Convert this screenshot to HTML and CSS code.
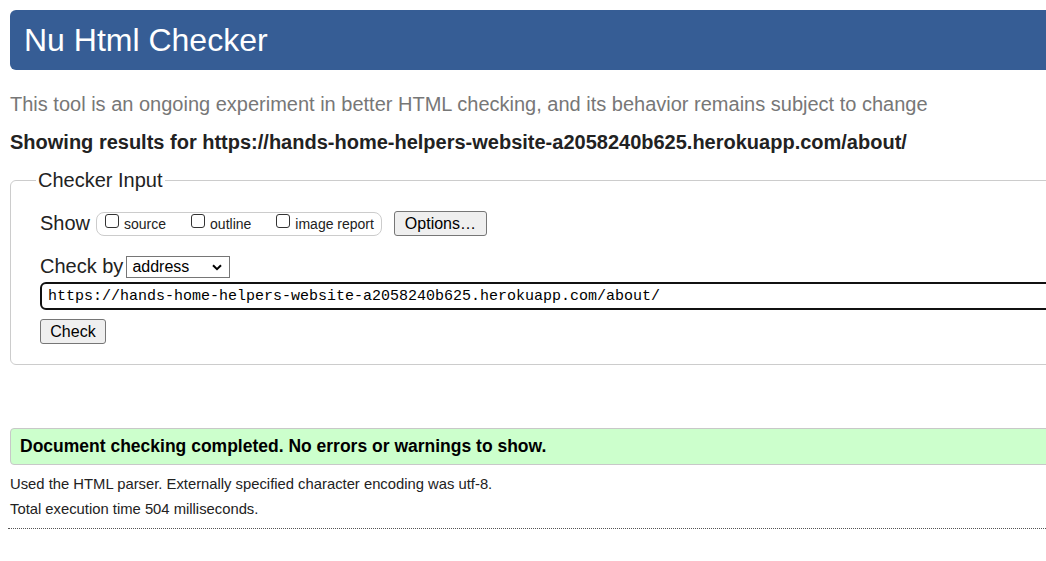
FILE: index.html
```html
<!DOCTYPE html>
<html lang="en">
<head>
<meta charset="utf-8">
<title>Showing results for https://hands-home-helpers-website-a2058240b625.herokuapp.com/about/ - Nu Html Checker</title>
<link rel="stylesheet" href="styles.css">
</head>
<body>
<div class="page">
  <h1 class="banner">Nu Html Checker</h1>
  <p class="tagline">This tool is an ongoing experiment in better HTML checking, and its behavior remains subject to change</p>
  <p class="showing">Showing results for https://hands-home-helpers-website-a2058240b625.herokuapp.com/about/</p>
  <form class="checker">
    <fieldset class="checker-box">
      <legend class="checker-legend">Checker Input</legend>
      <div class="show-row">
        <span class="big-label">Show</span>
        <span class="show-pill">
          <label class="opt"><input type="checkbox" class="cb"> source</label>
          <label class="opt"><input type="checkbox" class="cb"> outline</label>
          <label class="opt"><input type="checkbox" class="cb"> image report</label>
        </span>
        <button type="button" class="btn btn-options">Options…</button>
      </div>
      <div class="checkby-row">
        <span class="big-label">Check by</span>
        <span class="sel-wrap">
          <select class="sel"><option>address</option></select>
          <svg class="chev" width="10" height="7" viewBox="0 0 10 7" aria-hidden="true"><path d="M1 1.2 L5 5.2 L9 1.2" fill="none" stroke="#000" stroke-width="2"/></svg>
        </span>
      </div>
      <input type="text" class="url" value="https://hands-home-helpers-website-a2058240b625.herokuapp.com/about/">
      <div class="check-row"><button type="button" class="btn btn-check">Check</button></div>
    </fieldset>
  </form>
  <div class="success">Document checking completed. No errors or warnings to show.</div>
  <p class="details">Used the HTML parser. Externally specified character encoding was utf-8.</p>
  <p class="details">Total execution time 504 milliseconds.</p>
  <hr class="dotted">
</div>
</body>
</html>
```
FILE: styles.css
```css
html, body {
  margin: 0;
  padding: 0;
  overflow: hidden;
  background: #fff;
}
body {
  font-family: "Liberation Sans", Arial, sans-serif;
  color: #222;
}
.page {
  width: 1400px;
  padding: 10px 0 0 10px;
}
.banner {
  margin: 0;
  height: 60px;
  box-sizing: border-box;
  background: #365d95;
  color: #fff;
  border-radius: 6px;
  font-weight: normal;
  font-size: 32px;
  line-height: 60px;
  padding-left: 14px;
}
.tagline {
  margin: 20px 0 0;
  font-size: 20px;
  line-height: 28px;
  color: #777;
}
.showing {
  margin: 12px 0 0;
  font-size: 20px;
  font-weight: bold;
  line-height: 24px;
  color: #222;
}
.checker { margin: 15px 0 0; }
.checker-box {
  margin: 0;
  border: 1px solid #ccc;
  border-radius: 6px;
  padding: 6px 30px 20px 29px;
  min-width: 0;
}
.checker-legend {
  font-size: 20px;
  padding: 0 2px;
  margin-left: -4px;
  color: #222;
}
.show-row {
  display: flex;
  align-items: center;
  margin-top: 13px;
}
.big-label {
  font-size: 20px;
  color: #222;
}
.show-pill {
  display: inline-flex;
  align-items: center;
  border: 1px solid #ccc;
  border-radius: 8px;
  height: 22px;
  padding: 0 7px 0 8px;
  margin-left: 6px;
  font-size: 14px;
}
.opt {
  display: inline-flex;
  align-items: center;
  margin-right: 25px;
}
.opt:last-child { margin-right: 0; }
.cb {
  appearance: none;
  -webkit-appearance: none;
  box-sizing: border-box;
  margin: 0 5px 0 0;
  width: 14px;
  height: 14px;
  border: 1px solid #333;
  border-radius: 3px;
  background: #fff;
  position: relative;
  top: -3px;
}
.btn {
  font-family: "Liberation Sans", Arial, sans-serif;
  font-size: 16px;
  background: #efefef;
  border: 1px solid #767676;
  border-radius: 3px;
  color: #000;
  padding: 0 8px;
  height: 25px;
}
.btn-options { margin-left: 12px; width: 93px; }
.checkby-row {
  display: flex;
  align-items: center;
  margin-top: 19px;
}
.sel-wrap {
  position: relative;
  display: inline-flex;
  margin-left: 3px;
}
.sel {
  appearance: none;
  -webkit-appearance: none;
  font-family: "Liberation Sans", Arial, sans-serif;
  font-size: 16px;
  height: 22px;
  width: 104px;
  margin: 0;
  padding: 0 0 0 5px;
  border: 1px solid #767676;
  border-radius: 0;
  background: #fff;
  color: #000;
}
.chev {
  position: absolute;
  right: 8px;
  top: 8px;
  pointer-events: none;
}
.url {
  display: block;
  box-sizing: border-box;
  width: 1300px;
  height: 28px;
  margin-top: 4px;
  border: 2px solid #111;
  border-radius: 6px;
  padding: 0 6px;
  font-family: "Liberation Mono", "DejaVu Sans Mono", monospace;
  font-size: 15px;
  color: #000;
  outline: none;
}
.check-row { margin-top: 9px; }
.btn-check { width: 66px; }
.success {
  margin-top: 63px;
  height: 37px;
  box-sizing: border-box;
  background: #ccffcc;
  border: 1px solid #c8c8c8;
  border-radius: 4px;
  font-size: 17.5px;
  font-weight: bold;
  line-height: 34px;
  padding-left: 9px;
  color: #000;
}
.details {
  margin: 0;
  font-size: 14.8px;
  line-height: 25px;
  color: #222;
}
.success + .details { margin-top: 7px; }
.dotted {
  margin: 6px 0 0 -2px;
  border: 0;
  border-top: 1px dotted #555;
  height: 0;
}
```
